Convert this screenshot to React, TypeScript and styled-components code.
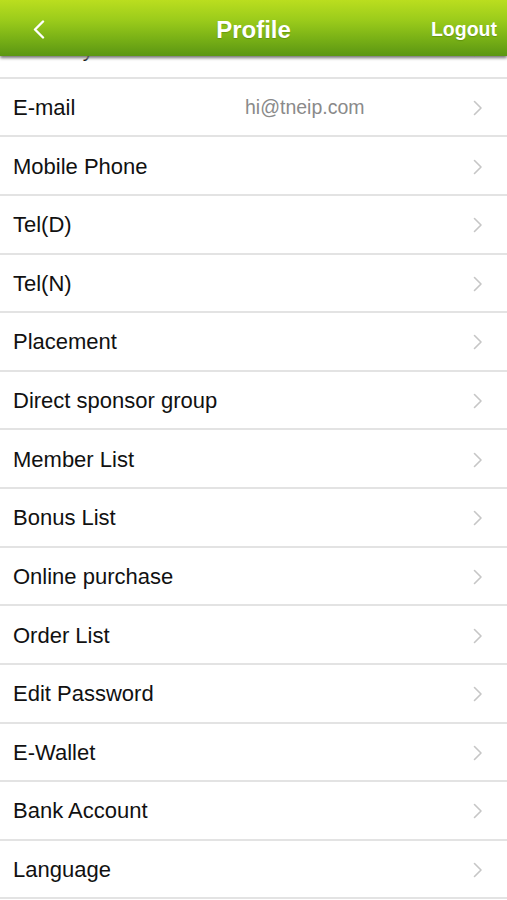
import React from "react";
import styled, { createGlobalStyle } from "styled-components";

const Global = createGlobalStyle`
  html, body { margin: 0; padding: 0; background: #ffffff; }
  body { font-family: "Liberation Sans", Arial, sans-serif; overflow: hidden; }
  * { box-sizing: border-box; }
`;

const Page = styled.div`
  width: 507px;
  height: 900px;
  overflow: hidden;
  background: #ffffff;
`;

const Header = styled.header`
  position: sticky;
  top: 0;
  z-index: 2;
  height: 56px;
  padding-top: 3px;
  display: grid;
  grid-template-columns: 1fr auto 1fr;
  align-items: center;
  background: linear-gradient(180deg, #bade1f 0%, #9ccc1b 35%, #78b016 70%, #5b9613 100%);
  box-shadow: 0 2px 3px rgba(0, 0, 0, 0.55), 0 3px 2px rgba(255, 255, 255, 0.6);
  color: #ffffff;
`;

const BackButton = styled.button`
  justify-self: start;
  display: flex;
  align-items: center;
  padding: 0 0 0 32px;
  margin: 0;
  border: 0;
  background: none;
  height: 100%;
  cursor: pointer;
`;

const Title = styled.h1`
  margin: 0;
  font-size: 24px;
  font-weight: 700;
  letter-spacing: 0;
  color: #ffffff;
  text-shadow: 0 1px 1px rgba(60, 100, 0, 0.35);
`;

const Logout = styled.button`
  justify-self: end;
  margin: 0;
  padding: 0 10px 0 0;
  border: 0;
  background: none;
  font-family: "Liberation Sans", Arial, sans-serif;
  font-size: 19.5px;
  font-weight: 700;
  color: #ffffff;
  text-shadow: 0 1px 1px rgba(60, 100, 0, 0.35);
  cursor: pointer;
`;

const List = styled.ul`
  list-style: none;
  margin: -36px 0 0 0;
  padding: 0;
`;

const Row = styled.li`
  height: 58.64px;
  display: grid;
  grid-template-columns: 232px 1fr auto;
  align-items: center;
  padding: 2px 24px 0 13px;
  border-bottom: 2px solid #e3e3e3;
`;

const Label = styled.span`
  font-size: 22px;
  color: #111111;
  white-space: nowrap;
`;

const Value = styled.span`
  font-size: 19.5px;
  color: #8a8a8a;
  white-space: nowrap;
`;

const Chevron = () => (
  <svg width="10" height="16" viewBox="0 0 10 16">
    <polyline points="1.5,1.5 8,8 1.5,14.5" fill="none" stroke="#c6c6c6" strokeWidth="1.6" strokeLinecap="round" strokeLinejoin="round" />
  </svg>
);

const BackIcon = () => (
  <svg width="13" height="19" viewBox="0 0 13 19">
    <polyline points="11,1.5 3,9.5 11,17.5" fill="none" stroke="#ffffff" strokeWidth="2.4" strokeLinecap="round" strokeLinejoin="round" />
  </svg>
);

const rows: { label: string; value?: string }[] = [
  { label: "Birthday", value: "1985-07-22 00:00" },
  { label: "E-mail", value: "hi@tneip.com" },
  { label: "Mobile Phone" },
  { label: "Tel(D)" },
  { label: "Tel(N)" },
  { label: "Placement" },
  { label: "Direct sponsor group" },
  { label: "Member List" },
  { label: "Bonus List" },
  { label: "Online purchase" },
  { label: "Order List" },
  { label: "Edit Password" },
  { label: "E-Wallet" },
  { label: "Bank Account" },
  { label: "Language" },
];

export default function App() {
  return (
    <Page>
      <Global />
      <Header>
        <BackButton aria-label="Back">
          <BackIcon />
        </BackButton>
        <Title>Profile</Title>
        <Logout>Logout</Logout>
      </Header>
      <List>
        {rows.map((r) => (
          <Row key={r.label}>
            <Label>{r.label}</Label>
            <Value>{r.value ?? ""}</Value>
            <Chevron />
          </Row>
        ))}
      </List>
    </Page>
  );
}
